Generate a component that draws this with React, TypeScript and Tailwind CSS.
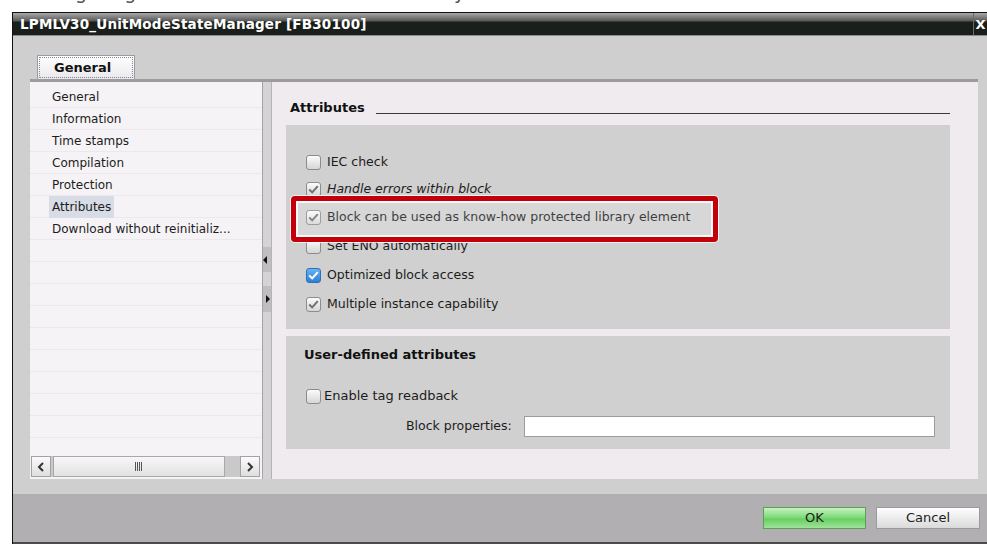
const NAV_ITEMS = [
  'General',
  'Information',
  'Time stamps',
  'Compilation',
  'Protection',
  'Attributes',
  'Download without reinitializ...',
]

const OPTIONS = [
  { label: 'IEC check', h: 'h-[26px]' },
  { label: 'Handle errors within block', checked: true, italic: true, h: 'h-[28px]' },
  { label: 'Block can be used as know-how protected library element', checked: true, h: 'h-[29px]' },
  { label: 'Set ENO automatically', h: 'h-[29px]' },
  { label: 'Optimized block access', checked: true, accent: true, h: 'h-[29px]' },
  { label: 'Multiple instance capability', checked: true, h: 'h-[28px]' },
]

function CheckBox({ checked, accent }: { checked?: boolean; accent?: boolean }) {
  return (
    <span
      className={`w-[15px] h-[15px] rounded-[3px] border flex items-center justify-center shrink-0 ${
        accent
          ? 'border-[#2f6fb6] bg-linear-to-b from-[#6ab2f0] to-[#2a80d6]'
          : 'border-[#8c8c8c] bg-linear-to-b from-[#fbfbfb] to-[#d6d6d6]'
      }`}
    >
      {checked && (
        <svg width="11" height="9" viewBox="0 0 11 9">
          <path d="M1.2 4.6 L4.2 7.4 L9.8 1.2" fill="none" stroke={accent ? '#ffffff' : '#707070'} strokeWidth="2" />
        </svg>
      )}
    </span>
  )
}

function ScrollButton({ dir }: { dir: 'left' | 'right' }) {
  return (
    <div className="w-[20px] h-full border border-[#a2a2a2] bg-linear-to-b from-[#fbfbfb] to-[#dedede] flex items-center justify-center">
      <svg width="8" height="10" viewBox="0 0 8 10">
        <path d={dir === 'left' ? 'M6 1 L2 5 L6 9' : 'M2 1 L6 5 L2 9'} fill="none" stroke="#333" strokeWidth="2" />
      </svg>
    </div>
  )
}

export default function App() {
  return (
    <div className="w-[987px] h-[547px] bg-white overflow-hidden flex flex-col font-['DejaVu_Sans',sans-serif]">
      {/* caption line above the dialog, mostly cut off */}
      <div className="h-[12px] overflow-hidden shrink-0">
        <p className="-mt-[19px] pl-[26px] text-[19px] leading-[22px] text-[#555] whitespace-nowrap">
          Configuring the block attributes for the library element
        </p>
      </div>

      <div className="ml-[12px] border-l border-t border-[#111] flex flex-col">
        {/* title bar */}
        <div className="h-[23px] flex items-center bg-[linear-gradient(to_bottom,#a8a8a8,#5a5c5a_35%,#1b1f1b_42%,#1b1f1b)] border-b border-[#8a8a8a]">
          <span className="pl-[7px] text-[13.5px] font-bold text-white tracking-[0.2px]">
            LPMLV30_UnitModeStateManager [FB30100]
          </span>
          <div className="ml-auto h-full w-[14px] border-l border-[#6a6a6a] flex items-center justify-center">
            <span className="text-[13px] font-bold text-white leading-none">X</span>
          </div>
        </div>

        <div className="bg-[#cfcfcf] flex flex-col pt-[19px]">
          {/* tab */}
          <div className="ml-[24px] w-[98px] h-[24px] border border-b-0 border-[#9c9c9c] bg-linear-to-b from-[#ffffff] to-[#ebe8eb] p-[1px]">
            <div className="h-full border border-dotted border-[#7c8aa8] flex items-center pl-[14px]">
              <span className="text-[13px] font-bold text-[#111]">General</span>
            </div>
          </div>

          {/* panel */}
          <div className="ml-[17px] mr-[9px] h-[400px] border-t-[3px] border-[#9c9c9c] flex">
            {/* navigation */}
            <div className="w-[232px] bg-[#f6f3f6] flex flex-col">
              <div className="flex-1 overflow-hidden pt-[4px]">
                {NAV_ITEMS.map((item) => (
                  <div key={item} className="h-[22px] border-b border-[#ece8ec] flex items-center pl-[22px]">
                    <span
                      className={`text-[12px] text-[#1c1c1c] whitespace-nowrap ${
                        item === 'Attributes' ? 'bg-[#d8dce6] -ml-[3px] px-[3px] py-[2px]' : ''
                      }`}
                    >
                      {item}
                    </span>
                  </div>
                ))}
                {Array.from({ length: 10 }).map((_, i) => (
                  <div key={i} className="h-[22px] border-b border-[#ece8ec]" />
                ))}
              </div>
              <div className="h-[21px] ml-[1px] mr-[2px] mb-[2px] flex bg-[#c9c9c9]">
                <ScrollButton dir="left" />
                <div className="ml-[2px] w-[172px] h-full border border-[#a8a8a8] bg-linear-to-b from-[#f7f7f7] to-[#e2e2e2] flex items-center justify-center">
                  <svg width="8" height="9" viewBox="0 0 8 9" shapeRendering="crispEdges">
                    <path d="M0.5 0 V9 M2.5 0 V9 M4.5 0 V9 M6.5 0 V9" stroke="#555" strokeWidth="1" />
                  </svg>
                </div>
                <div className="flex-1" />
                <ScrollButton dir="right" />
              </div>
            </div>

            {/* splitter */}
            <div className="w-[10px] bg-[#d5d3d5] border-l border-[#a4a4a4] border-r border-r-[#b4b4b4] flex flex-col pt-[165px]">
              <div className="h-[25px] bg-[#c0bec0] flex items-center">
                <svg width="5" height="8" viewBox="0 0 5 8"><path d="M4 0 L0 4 L4 8 Z" fill="#111" /></svg>
              </div>
              <div className="h-[14px]" />
              <div className="h-[26px] bg-[#c0bec0] flex items-center pl-[3px]">
                <svg width="5" height="8" viewBox="0 0 5 8"><path d="M0 0 L4 4 L0 8 Z" fill="#111" /></svg>
              </div>
            </div>

            {/* property content */}
            <div className="flex-1 bg-[#efebef] flex flex-col">
              <div className="h-[43px] pl-[18px] pr-[28px] pt-[18px] flex items-start">
                <span className="text-[13px] font-bold leading-[16px] text-[#111]">Attributes</span>
                <div className="flex-1 ml-[11px] mt-[13px] border-b border-[#3a3a3a]" />
              </div>

              <div className="relative ml-[14px] mr-[28px] h-[204px] bg-[#d0d0d0] pt-[24px] pl-[20px]">
                {OPTIONS.map((o) => (
                  <div key={o.label} className={`${o.h} flex items-center gap-[6px]`}>
                    <CheckBox checked={o.checked} accent={o.accent} />
                    <span className={`text-[12.5px] text-[#1c1c1c] ${o.italic ? 'italic' : ''}`}>{o.label}</span>
                  </div>
                ))}

                {/* highlight frame */}
                <div className="absolute left-[5px] top-[71px] w-[427px] h-[46px] rounded-[4px] border-[5px] border-[#c3000a] bg-white/15 shadow-[0_0_0_1px_rgba(255,255,255,0.75),inset_0_0_0_2px_rgba(255,255,255,0.85)]" />
              </div>

              <div className="ml-[14px] mr-[28px] mt-[7px] h-[113px] bg-[#d0d0d0] flex flex-col">
                <div className="pl-[18px] pt-[6px] h-[48px]">
                  <span className="text-[13px] font-bold leading-[16px] text-[#111]">User-defined attributes</span>
                </div>
                <div className="h-[22px] mt-[1px] pl-[20px] flex items-center gap-[3px]">
                  <CheckBox />
                  <span className="text-[13px] text-[#1c1c1c]">Enable tag readback</span>
                </div>
                <div className="mt-[9px] h-[21px] pl-[120px] pr-[15px] flex items-center gap-[12px]">
                  <span className="text-[12.5px] text-[#1c1c1c] whitespace-nowrap">Block properties:</span>
                  <div className="flex-1 h-full bg-white border border-[#9c9c9c]" />
                </div>
              </div>
            </div>
          </div>

          <div className="h-[15px]" />

          {/* footer */}
          <div className="h-[50px] bg-[#b1afb1] border-b-2 border-[#4a4a4a] flex justify-end pt-[13px] pr-[7px] gap-[10px]">
            <button className="w-[103px] h-[22px] border border-[#5f9e5a] bg-[linear-gradient(to_bottom,#c6f2c2,#7ad874_50%,#67cf61_55%,#9fe39a)] text-[13px] text-[#1c1c1c]">
              OK
            </button>
            <button className="w-[104px] h-[22px] border border-[#9a9a9a] bg-linear-to-b from-[#fefefe] to-[#dadada] text-[13px] text-[#1c1c1c]">
              Cancel
            </button>
          </div>
        </div>
      </div>
    </div>
  )
}
